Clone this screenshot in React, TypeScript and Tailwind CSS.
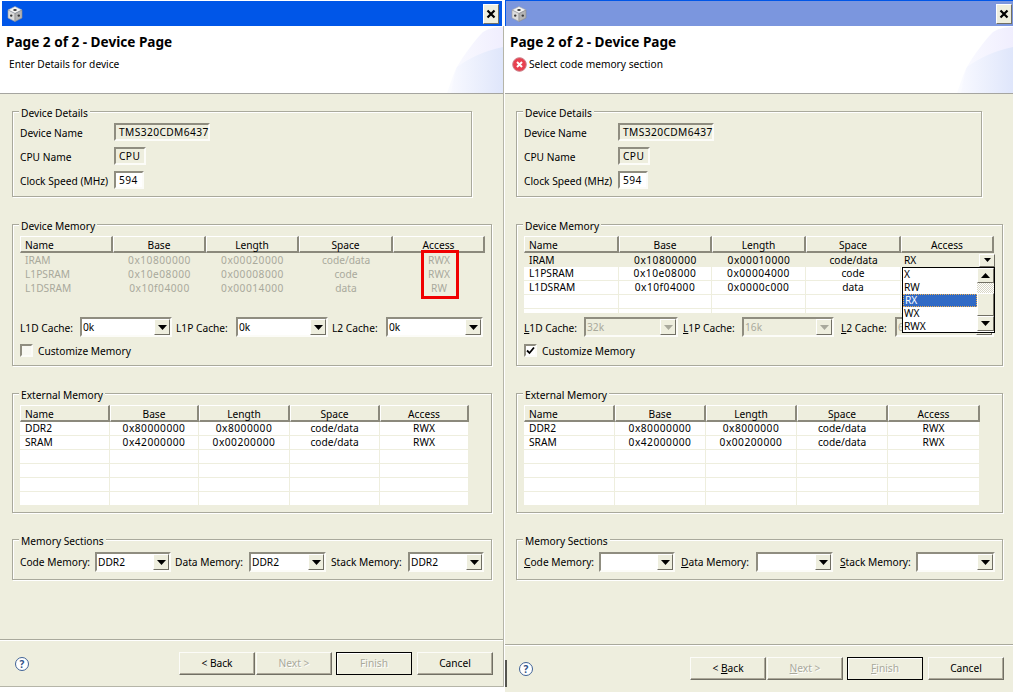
import type { ReactNode } from "react";

const FACE = "bg-[#eeeede]";

function Mn({ text, on }: { text: string; on: boolean }) {
  // mnemonic underline on first letter, only shown in the second dialog
  if (!on) return <>{text}</>;
  return (
    <>
      <u>{text[0]}</u>
      {text.slice(1)}
    </>
  );
}

function CubeIcon() {
  return (
    <svg width="16" height="16" viewBox="0 0 16 16">
      <polygon points="8,0.5 15,4 8,7.5 1,4" fill="#f4f4f4" stroke="#a8a8a8" strokeWidth="0.6" strokeLinejoin="round" />
      <polygon points="1,4 8,7.5 8,15.5 1,12" fill="#dcdcdc" stroke="#9c9c9c" strokeWidth="0.6" strokeLinejoin="round" />
      <polygon points="15,4 8,7.5 8,15.5 15,12" fill="#b4b4b4" stroke="#8c8c8c" strokeWidth="0.6" strokeLinejoin="round" />
      <ellipse cx="8" cy="4" rx="1.8" ry="1.1" fill="#3a3a3a" />
      <circle cx="4.2" cy="9.6" r="1.2" fill="#3a3a3a" />
      <circle cx="11.8" cy="9.6" r="1.2" fill="#3a3a3a" />
    </svg>
  );
}

function TitleBar({ active }: { active: boolean }) {
  return (
    <div
      className={
        active
          ? "mt-px ml-[2px] mr-[3px] flex h-[25px] items-center bg-[#0056e8] pl-[5px] pr-[3px]"
          : "flex h-[26px] items-center border-t border-l border-[#0056e8] bg-[#7b96de] pl-[5px] pr-[1px]"
      }
    >
      <CubeIcon />
      <div className={`ml-auto flex h-[20px] w-[16px] items-center justify-center border border-t-white border-l-white border-r-[#716f64] border-b-[#716f64] ${FACE}`}>
        <svg width="10" height="10" viewBox="0 0 10 10">
          <path d="M1.5 1.5 L8.5 8.5 M8.5 1.5 L1.5 8.5" stroke="#000" strokeWidth="2.2" />
        </svg>
      </div>
    </div>
  );
}

function Banner({ id }: { id: string }) {
  return (
    <svg className="absolute right-0 bottom-0" width="60" height="67" viewBox="0 0 60 67">
      <defs>
        <linearGradient id={`${id}a`} x1="0" y1="0" x2="1" y2="0">
          <stop offset="0" stopColor="#fbfcff" />
          <stop offset="1" stopColor="#f0eefe" />
        </linearGradient>
        <linearGradient id={`${id}b`} x1="0" y1="0" x2="1" y2="0">
          <stop offset="0" stopColor="#f8f9ff" />
          <stop offset="1" stopColor="#dfe6fb" />
        </linearGradient>
      </defs>
      <path d="M4 67 C8 56 11 46 14 41 C20 30 32 14 40 6 C46 2 54 1 60 1 L60 67 Z" fill={`url(#${id}a)`} />
      <path d="M8 67 C10 56 12 46 14 41 C25 33 40 25 60 21 L60 67 Z" fill={`url(#${id}b)`} />
    </svg>
  );
}

function ErrorIcon() {
  return (
    <svg width="15" height="15" viewBox="0 0 15 15" className="mr-[2px]">
      <circle cx="7.5" cy="7.5" r="6.8" fill="#e8414f" stroke="#c9808a" strokeWidth="1" />
      <path d="M5 5 L10 10 M10 5 L5 10" stroke="#fff" strokeWidth="2" />
    </svg>
  );
}

function Header({ msg, error, id }: { msg: string; error?: boolean; id: string }) {
  return (
    <div className="relative h-[68px] border-b border-[#a5a5a0] bg-white pt-[8px]">
      <Banner id={id} />
      <div className={`text-[13.6px] font-bold leading-[15px] text-black ${error ? "pl-[5px]" : "pl-[6px]"}`}>
        Page 2 of 2 - Device Page
      </div>
      <div className={`mt-[8px] flex h-[15px] items-center ${error ? "pl-[7px]" : "pl-[9px]"}`}>
        {error && <ErrorIcon />}
        <span>{msg}</span>
      </div>
    </div>
  );
}

function Group({ title, className, children }: { title: string; className: string; children: ReactNode }) {
  return (
    <div className={`relative border border-[#a9a99c] pl-[7px] shadow-[inset_1px_1px_0_#fff,1px_1px_0_#fff] ${className}`}>
      <span className={`absolute top-[-5px] left-[6px] ${FACE} px-[2px] leading-[13px]`}>{title}</span>
      {children}
    </div>
  );
}

const sunken = "border-2 border-t-[#8f8d80] border-l-[#8f8d80] border-r-[#fcfcf8] border-b-[#fcfcf8]";

function Field({ label, value, width, editable }: { label: string; value: string; width: string; editable?: boolean }) {
  return (
    <div className="flex h-[18px] items-center">
      <span className="w-[94px] pt-[2px]">{label}</span>
      <span className={`flex h-[18px] items-center pl-[3px] pt-px tracking-[0.4px] ${sunken} ${width} ${editable ? "bg-white" : ""}`}>{value}</span>
    </div>
  );
}

function Arrow({ gray, up }: { gray?: boolean; up?: boolean }) {
  return (
    <svg width="9" height="5" viewBox="0 0 9 5">
      <polygon points={up ? "4.5,0 9,5 0,5" : "0,0 9,0 4.5,5"} fill={gray ? "#a9a99c" : "#000"} />
    </svg>
  );
}

function Combo({ value, width, disabled }: { value: string; width: string; disabled?: boolean }) {
  return (
    <div className={`flex h-[20px] shrink-0 items-center ${sunken} ${width} ${disabled ? "text-[#a9a99c]" : "bg-white"}`}>
      <span className="flex-1 pl-[1px] leading-[14px]">{value}</span>
      <span className={`flex h-[16px] w-[16px] items-center justify-center border border-t-white border-l-white border-r-[#716f64] border-b-[#716f64] ${FACE}`}>
        <Arrow gray={disabled} />
      </span>
    </div>
  );
}

function Label({ text, width, mn }: { text: string; width: string; mn: boolean }) {
  return (
    <span className={`shrink-0 ${width}`}>
      <Mn text={text} on={mn} />
    </span>
  );
}

type Row = string[];

function Table({
  cols,
  rows,
  total,
  disabled,
  editRow,
}: {
  cols: number[];
  rows: Row[];
  total: number;
  disabled?: boolean;
  editRow?: boolean;
}) {
  const filled: Row[] = [...rows];
  while (filled.length < total) filled.push(["", "", "", "", ""]);
  return (
    <div>
      <div className="flex h-[17px]">
        {["Name", "Base", "Length", "Space", "Access"].map((h, i) => (
          <div
            key={h}
            style={{ width: cols[i] }}
            className={`flex h-[17px] items-center border-t border-l border-t-white border-l-white border-r-2 border-b-2 border-r-[#8b897c] border-b-[#8b897c] pt-[2px] ${
              i === 0 ? "pl-[4px]" : "justify-center"
            }`}
          >
            {h}
          </div>
        ))}
      </div>
      {filled.map((r, ri) => (
        <div key={ri} className={`flex h-[14px] ${disabled ? "text-[#a9a99c]" : ""}`}>
          {r.map((c, i) => (
            <div
              key={i}
              style={{ width: cols[i] }}
              className={`flex h-[14px] items-center ${i === 0 ? "pl-[5px]" : "justify-center"} ${
                c.startsWith("0x") ? "tracking-[0.5px]" : ""
              } ${
                disabled
                  ? ""
                  : editRow && ri === 0
                    ? FACE
                    : "border-r border-b border-[#eeeede] bg-white"
              }`}
            >
              {c}
            </div>
          ))}
        </div>
      ))}
    </div>
  );
}

function AccessEditor() {
  const items = ["X", "RW", "RX", "WX", "RWX"];
  return (
    <>
      <div className={`absolute top-[17px] left-[376px] flex h-[14px] w-[95px] items-center pl-[4px] ${FACE}`}>
        RX
        <span className="ml-auto flex h-[13px] w-[16px] items-center justify-center border border-t-white border-l-white border-r-[#716f64] border-b-[#716f64]">
          <svg width="7" height="4" viewBox="0 0 7 4">
            <polygon points="0,0 7,0 3.5,4" fill="#000" />
          </svg>
        </span>
      </div>
      <div className="absolute top-[31px] left-[378px] z-10 flex h-[66px] w-[93px] border border-black bg-white">
        <div className="flex-1">
          {items.map((it) => (
            <div
              key={it}
              className={`flex h-[13px] items-center pl-px ${
                it === "RX" ? "border border-dotted border-[#f0b050] bg-[#316ac5] text-white" : ""
              }`}
            >
              {it}
            </div>
          ))}
        </div>
        <div className="flex w-[17px] flex-col">
          <ScrollBtn up />
          <div className="h-[10px] bg-[repeating-conic-gradient(#ffffff_0_25%,#d8d6c6_0_50%)] bg-[length:2px_2px]" />
          <div className={`h-[23px] border border-t-white border-l-white border-r-[#716f64] border-b-[#716f64] ${FACE}`} />
          <ScrollBtn />
        </div>
      </div>
    </>
  );
}

function ScrollBtn({ up }: { up?: boolean }) {
  return (
    <span className={`flex h-[15px] items-center justify-center border border-t-white border-l-white border-r-[#716f64] border-b-[#716f64] ${FACE}`}>
      <Arrow up={up} />
    </span>
  );
}

function HelpIcon() {
  return (
    <span className="flex h-[14px] w-[14px] items-center justify-center rounded-full border-[1.5px] border-[#3f6296] bg-white text-[10px] font-bold leading-none text-[#2f4f86]">
      ?
    </span>
  );
}

function Btn({ text, mn, disabled, isDefault, className }: { text: string; mn?: number; disabled?: boolean; isDefault?: boolean; className?: string }) {
  const label =
    mn !== undefined ? (
      <>
        {text.slice(0, mn)}
        <u>{text[mn]}</u>
        {text.slice(mn + 1)}
      </>
    ) : (
      text
    );
  return (
    <div
      className={`flex h-[23px] w-[76px] items-center justify-center whitespace-pre border ${
        isDefault
          ? "border-black shadow-[inset_1px_1px_0_#fff]"
          : "border-t-[#fcfcf8] border-l-[#fcfcf8] border-r-[#716f64] border-b-[#716f64] shadow-[inset_-1px_-1px_0_#aca899]"
      } ${disabled ? "text-[#a9a99c] [text-shadow:1px_1px_0_#fff]" : ""} ${className ?? ""}`}
    >
      {label}
    </div>
  );
}

function Footer({ mn, className, lineGap, helpMl }: { mn: boolean; className: string; lineGap: string; helpMl: string }) {
  return (
    <>
      <div className={`h-[2px] border-t border-b border-t-[#a9a99c] border-b-white ${lineGap}`} />
      <div className={`mt-[11px] flex items-center ${className}`}>
        <span className={helpMl}>
          <HelpIcon />
        </span>
        <div className="ml-auto flex">
          <Btn text="< Back" mn={mn ? 2 : undefined} />
          <Btn text="Next >" mn={mn ? 0 : undefined} disabled className="ml-px" />
          <Btn text="Finish" mn={mn ? 0 : undefined} disabled isDefault className="ml-[4px]" />
          <Btn text="Cancel" className="ml-[5px]" />
        </div>
      </div>
    </>
  );
}

const extRows = [
  ["DDR2", "0x80000000", "0x8000000", "code/data", "RWX"],
  ["SRAM", "0x42000000", "0x00200000", "code/data", "RWX"],
];

function LeftDialog() {
  return (
    <div className="h-[692px] w-[505px] shrink-0">
      <TitleBar active />
      <div className={`h-[661px] w-[504px] border-r border-b border-[#b5b5a8] ${FACE}`}>
        <Header msg="Enter Details for device" id="bannerLeft" />
        <div className="pl-[12px]">
          <Group title="Device Details" className="mt-[17px] h-[86px] w-[460px] pt-[11px]">
            <div className="flex flex-col gap-[6px]">
              <Field label="Device Name" value="TMS320CDM6437" width="w-[96px]" />
              <Field label="CPU Name" value="CPU" width="w-[32px]" />
              <Field label="Clock Speed (MHz)" value="594" width="w-[30px]" editable />
            </div>
          </Group>
          <Group title="Device Memory" className="mt-[27px] h-[142px] w-[480px] pt-[11px]">
            <div className="relative h-[77px]">
              <Table
                cols={[93, 93, 93, 94, 92]}
                total={3}
                disabled
                rows={[
                  ["IRAM", "0x10800000", "0x00020000", "code/data", "RWX"],
                  ["L1PSRAM", "0x10e08000", "0x00008000", "code", "RWX"],
                  ["L1DSRAM", "0x10f04000", "0x00014000", "data", "RW"],
                ]}
              />
              <div className="absolute top-[14px] left-[401px] h-[49px] w-[38px] border-[3px] border-[#f00000]" />
            </div>
            <div className="mt-[4px] flex h-[20px] items-center">
              <Label text="L1D Cache:" width="w-[60px] pt-[2px]" mn={false} />
              <Combo value="0k" width="w-[92px]" />
              <Label text="L1P Cache:" width="w-[60px] ml-[4px] pt-[2px]" mn={false} />
              <Combo value="0k" width="w-[92px]" />
              <Label text="L2 Cache:" width="w-[54px] ml-[4px] pt-[2px]" mn={false} />
              <Combo value="0k" width="w-[97px]" />
            </div>
            <div className="mt-[7px] flex h-[13px] items-center">
              <span className="h-[13px] w-[13px] border-2 border-t-[#8f8d80] border-l-[#8f8d80] border-r-[#fcfcf8] border-b-[#fcfcf8] bg-[#f8f8f2]" />
              <span className="ml-[5px] pt-px">Customize Memory</span>
            </div>
          </Group>
          <Group title="External Memory" className="mt-[27px] h-[120px] w-[480px] pt-[11px]">
            <Table cols={[90, 89, 91, 90, 89]} total={6} rows={extRows} />
          </Group>
          <Group title="Memory Sections" className="mt-[26px] h-[41px] w-[480px] pt-[12px]">
            <div className="flex items-center">
              <Label text="Code Memory:" width="w-[75px]" mn={false} />
              <Combo value="DDR2" width="w-[76px]" />
              <Label text="Data Memory:" width="w-[74px] ml-[4px]" mn={false} />
              <Combo value="DDR2" width="w-[77px]" />
              <Label text="Stack Memory:" width="w-[77px] ml-[5px]" mn={false} />
              <Combo value="DDR2" width="w-[76px]" />
            </div>
          </Group>
        </div>
        <Footer mn={false} lineGap="mt-[59px]" helpMl="ml-[15px]" className="pr-[10px]" />
      </div>
    </div>
  );
}

function RightDialog() {
  return (
    <div className={`relative h-[692px] flex-1 ${FACE}`}>
      <div className="absolute top-[660px] left-0 h-[27px] w-[2px] bg-[#55554f]" />
      <TitleBar active={false} />
      <Header msg="Select code memory section" error id="bannerRight" />
      <div className="pl-[11px]">
        <Group title="Device Details" className="mt-[17px] h-[86px] w-[466px] pt-[11px]">
          <div className="flex flex-col gap-[6px]">
            <Field label="Device Name" value="TMS320CDM6437" width="w-[96px]" />
            <Field label="CPU Name" value="CPU" width="w-[32px]" />
            <Field label="Clock Speed (MHz)" value="594" width="w-[30px]" editable />
          </div>
        </Group>
        <Group title="Device Memory" className="mt-[27px] h-[142px] w-[487px] pt-[11px]">
          <div className="relative h-[77px]">
            <div className="h-[77px] overflow-hidden">
              <Table
                cols={[95, 93, 94, 95, 93]}
                total={5}
                editRow
                rows={[
                  ["IRAM", "0x10800000", "0x00010000", "code/data", ""],
                  ["L1PSRAM", "0x10e08000", "0x00004000", "code", ""],
                  ["L1DSRAM", "0x10f04000", "0x0000c000", "data", ""],
                ]}
              />
            </div>
            <AccessEditor />
          </div>
          <div className="mt-[4px] flex h-[20px] items-center">
            <Label text="L1D Cache:" width="w-[60px] pt-[2px]" mn />
            <Combo value="32k" width="w-[94px]" disabled />
            <Label text="L1P Cache:" width="w-[59px] ml-[5px] pt-[2px]" mn />
            <Combo value="16k" width="w-[92px]" disabled />
            <Label text="L2 Cache:" width="w-[54px] ml-[7px] pt-[2px]" mn />
            <Combo value="6" width="w-[99px]" disabled />
          </div>
          <div className="mt-[7px] flex h-[13px] items-center">
            <span className="flex h-[13px] w-[13px] items-center justify-center border-2 border-t-[#8f8d80] border-l-[#8f8d80] border-r-[#fcfcf8] border-b-[#fcfcf8] bg-white">
              <svg width="9" height="9" viewBox="0 0 9 9">
                <path d="M1 4.5 L3.5 7 L8 1.5" fill="none" stroke="#000" strokeWidth="1.8" />
              </svg>
            </span>
            <span className="ml-[5px] pt-px">Customize Memory</span>
          </div>
        </Group>
        <Group title="External Memory" className="mt-[27px] h-[120px] w-[487px] pt-[11px]">
          <Table cols={[91, 91, 91, 91, 92]} total={6} rows={extRows} />
        </Group>
        <Group title="Memory Sections" className="mt-[26px] h-[41px] w-[487px] pt-[12px]">
          <div className="flex items-center">
            <Label text="Code Memory:" width="w-[75px]" mn />
            <Combo value="" width="w-[76px]" />
            <Label text="Data Memory:" width="w-[75px] ml-[6px]" mn />
            <Combo value="" width="w-[77px]" />
            <Label text="Stack Memory:" width="w-[76px] ml-[7px]" mn />
            <Combo value="" width="w-[79px]" />
          </div>
        </Group>
      </div>
      <Footer mn lineGap="mt-[64px]" helpMl="ml-[14px]" className="pr-[9px]" />
    </div>
  );
}

export default function App() {
  return (
    <div className="flex h-[692px] w-[1013px] overflow-hidden whitespace-nowrap bg-white font-['Noto_Sans',sans-serif] text-[10.2px] leading-none text-black">
      <LeftDialog />
      <RightDialog />
    </div>
  );
}
